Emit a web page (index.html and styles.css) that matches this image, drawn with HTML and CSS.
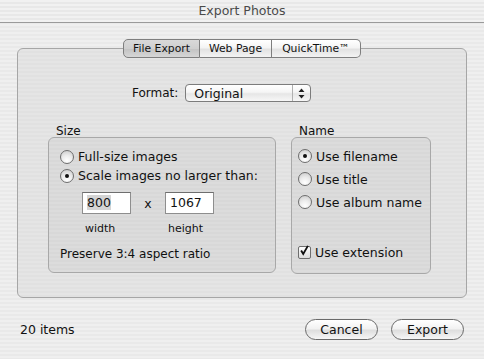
FILE: index.html
```html
<!DOCTYPE html>
<html lang="en">
<head>
    <meta charset="UTF-8">
    <title>Export Photos</title>
    <link rel="stylesheet" href="styles.css">
</head>
<body>
    <div class="titlebar">Export Photos</div>

    <div class="tabs">
        <span class="tab active">File Export</span>
        <span class="tab">Web Page</span>
        <span class="tab">QuickTime™</span>
    </div>

    <div class="tab-box">
        <div class="format-row">
            <span class="format-label">Format:</span>
            <div class="popup">
                <span>Original</span>
                <span class="popup-arrows">
                    <svg width="7" height="11" viewBox="0 0 7 11"><path d="M3.5 0.5 L6.5 4 L0.5 4 Z M3.5 10.5 L6.5 7 L0.5 7 Z" fill="#222"/></svg>
                </span>
            </div>
        </div>

        <div class="groups">
            <div class="group size-group">
                <div class="group-label">Size</div>
                <div class="group-box">
                    <label class="option"><span class="radio"></span>Full-size images</label>
                    <label class="option"><span class="radio on"></span>Scale images no larger than:</label>
                    <div class="dims">
                        <div class="dim">
                            <span class="field"><span class="sel">800</span></span>
                            <span class="dim-label">width</span>
                        </div>
                        <span class="times">x</span>
                        <div class="dim">
                            <span class="field">1067</span>
                            <span class="dim-label">height</span>
                        </div>
                    </div>
                    <div class="ratio">Preserve 3:4 aspect ratio</div>
                </div>
            </div>

            <div class="group name-group">
                <div class="group-label">Name</div>
                <div class="group-box">
                    <label class="option"><span class="radio on"></span>Use filename</label>
                    <label class="option"><span class="radio"></span>Use title</label>
                    <label class="option"><span class="radio"></span>Use album name</label>
                    <label class="option check-option"><span class="checkbox">
                        <svg width="13" height="13" viewBox="0 0 13 13"><path d="M2.5 6.5 L5 10.5 L10.5 1" stroke="#111" stroke-width="2.2" fill="none"/></svg>
                    </span>Use extension</label>
                </div>
            </div>
        </div>
    </div>

    <div class="footer">
        <span class="count">20 items</span>
        <div class="buttons">
            <button class="btn">Cancel</button>
            <button class="btn">Export</button>
        </div>
    </div>
</body>
</html>
```

FILE: styles.css
```css
body {
    margin: 0;
    width: 484px;
    height: 359px;
    overflow: hidden;
    font-family: "DejaVu Sans", sans-serif;
    font-size: 12px;
    color: #111;
    background: repeating-linear-gradient(to bottom, #efefef 0, #efefef 2px, #e9e9e9 2px, #e9e9e9 4px);
}
.titlebar {
    height: 22px;
    line-height: 22px;
    text-align: center;
    font-size: 12.5px;
    color: #4a4a4a;
    border-bottom: 1px solid #9a9a9a;
    background: repeating-linear-gradient(to bottom, #f1f1f1 0, #f1f1f1 2px, #e8e8e8 2px, #e8e8e8 4px);
}
.tabs {
    display: flex;
    justify-content: center;
    margin: 16px 0 -10px 0;
    position: relative;
    z-index: 1;
}
.tab {
    box-sizing: border-box;
    height: 19px;
    line-height: 17px;
    padding: 0;
    text-align: center;
    white-space: nowrap;
    font-size: 10.8px;
    border: 1px solid #7e7e7e;
    border-left: none;
    background: linear-gradient(to bottom, #ffffff 0%, #f4f4f4 45%, #e2e2e2 55%, #f3f3f3 100%);
}
.tab:first-child {
    border-left: 1px solid #7e7e7e;
    border-radius: 5px 0 0 5px;
}
.tab:last-child {
    border-radius: 0 5px 5px 0;
}
.tab.active {
    background: linear-gradient(to bottom, #d9d9d9 0%, #cfcfcf 50%, #c4c4c4 55%, #d6d6d6 100%);
}
.tab:nth-child(1) { width: 77px; }
.tab:nth-child(2) { width: 72px; }
.tab:nth-child(3) { width: 89px; }

.tab-box {
    box-sizing: border-box;
    margin-left: 17px;
    width: 450px;
    height: 250px;
    border: 1px solid #a6a6a6;
    border-radius: 6px;
    background: repeating-linear-gradient(to bottom, #e5e5e5 0, #e5e5e5 2px, #e1e1e1 2px, #e1e1e1 4px);
    padding: 35px 0 0 30px;
}
.format-row {
    display: flex;
    align-items: center;
    margin-left: 84px;
}
.format-label {
    margin-right: 7px;
}
.popup {
    box-sizing: border-box;
    width: 126px;
    height: 18px;
    display: flex;
    align-items: center;
    justify-content: space-between;
    padding-left: 8px;
    border: 1px solid #7c7c7c;
    border-radius: 4px;
    background: linear-gradient(to bottom, #ffffff 0%, #f5f5f5 45%, #e6e6e6 55%, #f7f7f7 100%);
    font-size: 12.5px;
}
.popup-arrows {
    width: 17px;
    height: 16px;
    display: flex;
    align-items: center;
    justify-content: center;
    border-left: 1px solid #b0b0b0;
}
.groups {
    display: flex;
    gap: 15px;
    margin-top: 20px;
}
.group-label {
    padding-left: 8px;
    height: 15px;
    line-height: 18px;
}
.group-box {
    box-sizing: border-box;
    border: 1px solid #a8a8a8;
    border-radius: 6px;
    background: repeating-linear-gradient(to bottom, #dcdcdc 0, #dcdcdc 2px, #d8d8d8 2px, #d8d8d8 4px);
}
.size-group .group-box {
    width: 228px;
    height: 136px;
    padding: 9px 0 0 11px;
}
.name-group .group-box {
    width: 140px;
    height: 137px;
    padding: 8px 0 0 6px;
}
.option {
    display: flex;
    align-items: center;
    height: 19px;
    font-size: 12.5px;
}
.name-group .option {
    height: 20px;
    margin-bottom: 3px;
}
.radio {
    box-sizing: border-box;
    width: 14px;
    height: 14px;
    border-radius: 50%;
    border: 1px solid #6e6e6e;
    background: radial-gradient(circle at 50% 80%, #ffffff 0%, #ececec 45%, #c8c8c8 100%);
    margin-right: 4px;
    display: flex;
    align-items: center;
    justify-content: center;
}
.radio.on::after {
    content: "";
    width: 4px;
    height: 4px;
    border-radius: 50%;
    background: #111;
}
.name-group .check-option {
    margin-top: 30px;
}
.checkbox {
    box-sizing: border-box;
    width: 13px;
    height: 13px;
    border: 1px solid #6e6e6e;
    border-radius: 2px;
    background: linear-gradient(to bottom, #ffffff, #dcdcdc);
    margin-right: 4px;
    display: flex;
    align-items: center;
    justify-content: center;
}
.checkbox svg {
    margin-top: -3px;
}
.dims {
    display: flex;
    margin: 7px 0 0 22px;
}
.dim {
    display: flex;
    flex-direction: column;
}
.field {
    box-sizing: border-box;
    width: 49px;
    height: 22px;
    line-height: 18px;
    padding: 1px 0 0 4px;
    background: #fff;
    border: 1px solid #8e8e8e;
    border-top-color: #6e6e6e;
    font-size: 12.5px;
}
.sel {
    background: #d4d4d4;
}
.dim-label {
    margin-top: 8px;
    font-size: 11px;
    padding-left: 3px;
}
.times {
    width: 34px;
    text-align: center;
    line-height: 24px;
    font-size: 12.5px;
}
.ratio {
    margin-top: 12px;
    font-size: 12px;
}
.footer {
    display: flex;
    justify-content: space-between;
    align-items: center;
    margin-top: 21px;
    padding: 0 20px 0 20px;
}
.count {
    font-size: 12.5px;
}
.buttons {
    display: flex;
    gap: 13px;
}
.btn {
    font-family: "DejaVu Sans", sans-serif;
    font-size: 12.5px;
    color: #111;
    height: 21px;
    width: 73px;
    padding: 0;
    border: 1px solid #6a6a6a;
    border-radius: 11px;
    background: linear-gradient(to bottom, #ffffff 0%, #f2f2f2 45%, #dedede 55%, #f6f6f6 100%);
}
```
